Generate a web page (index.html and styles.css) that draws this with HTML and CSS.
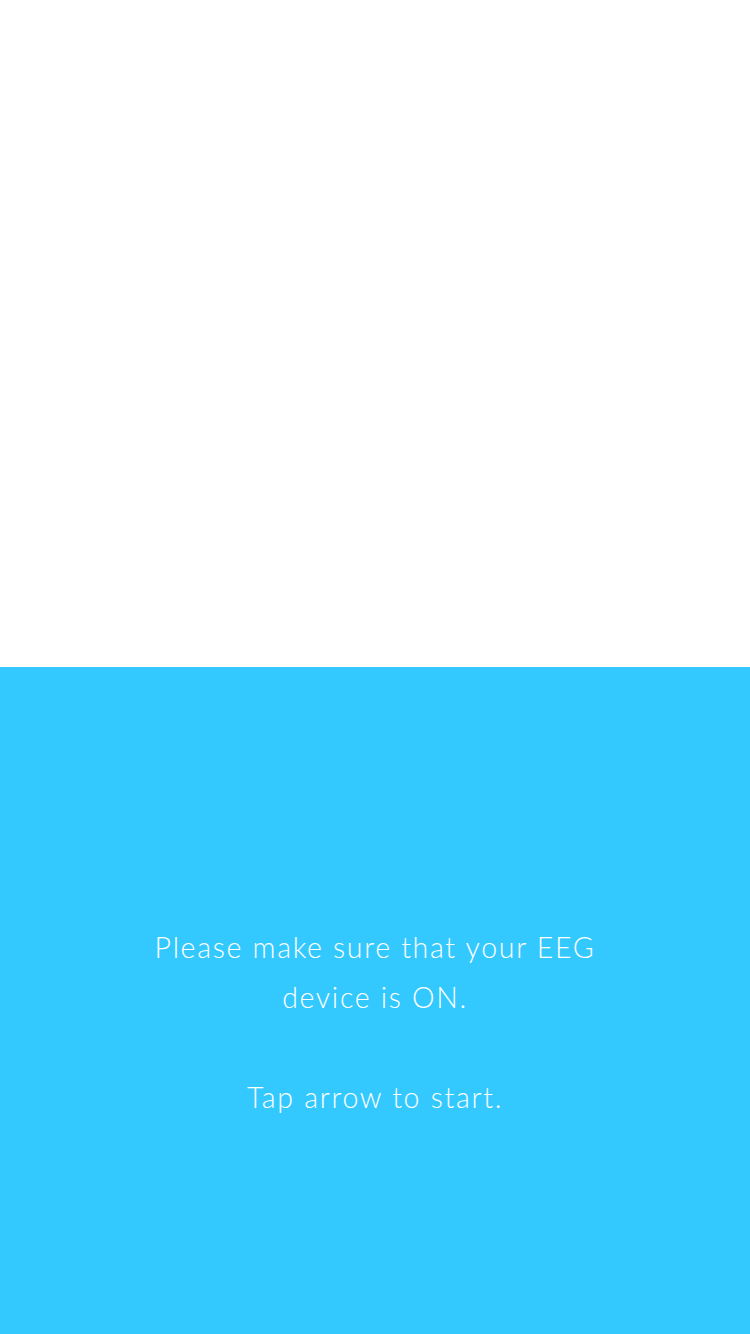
FILE: index.html
```html
<!DOCTYPE html>
<html lang="en">
<head>
<meta charset="utf-8">
<title>EEG</title>
<link rel="stylesheet" href="styles.css">
</head>
<body>
<div class="screen">
  <div class="top"></div>
  <div class="bottom">
    <div class="message">
      <p class="line">Please make sure that your EEG<br>device is ON.</p>
      <p class="line">Tap arrow to start.</p>
    </div>
  </div>
</div>
</body>
</html>
```
FILE: styles.css
```css
html, body {
  margin: 0;
  padding: 0;
}
.screen {
  width: 750px;
  height: 1334px;
  display: flex;
  flex-direction: column;
  font-family: Lato, "Open Sans", sans-serif;
}
.top {
  height: 667px;
  background: #ffffff;
}
.bottom {
  height: 667px;
  background: #33c9ff;
  padding-top: 255px;
  box-sizing: border-box;
}
.message {
  display: flex;
  flex-direction: column;
  gap: 50px;
  color: #ffffff;
  text-align: center;
}
.line {
  margin: 0;
  font-size: 28.5px;
  font-weight: 300;
  line-height: 50px;
  letter-spacing: 1.7px;
}
```
